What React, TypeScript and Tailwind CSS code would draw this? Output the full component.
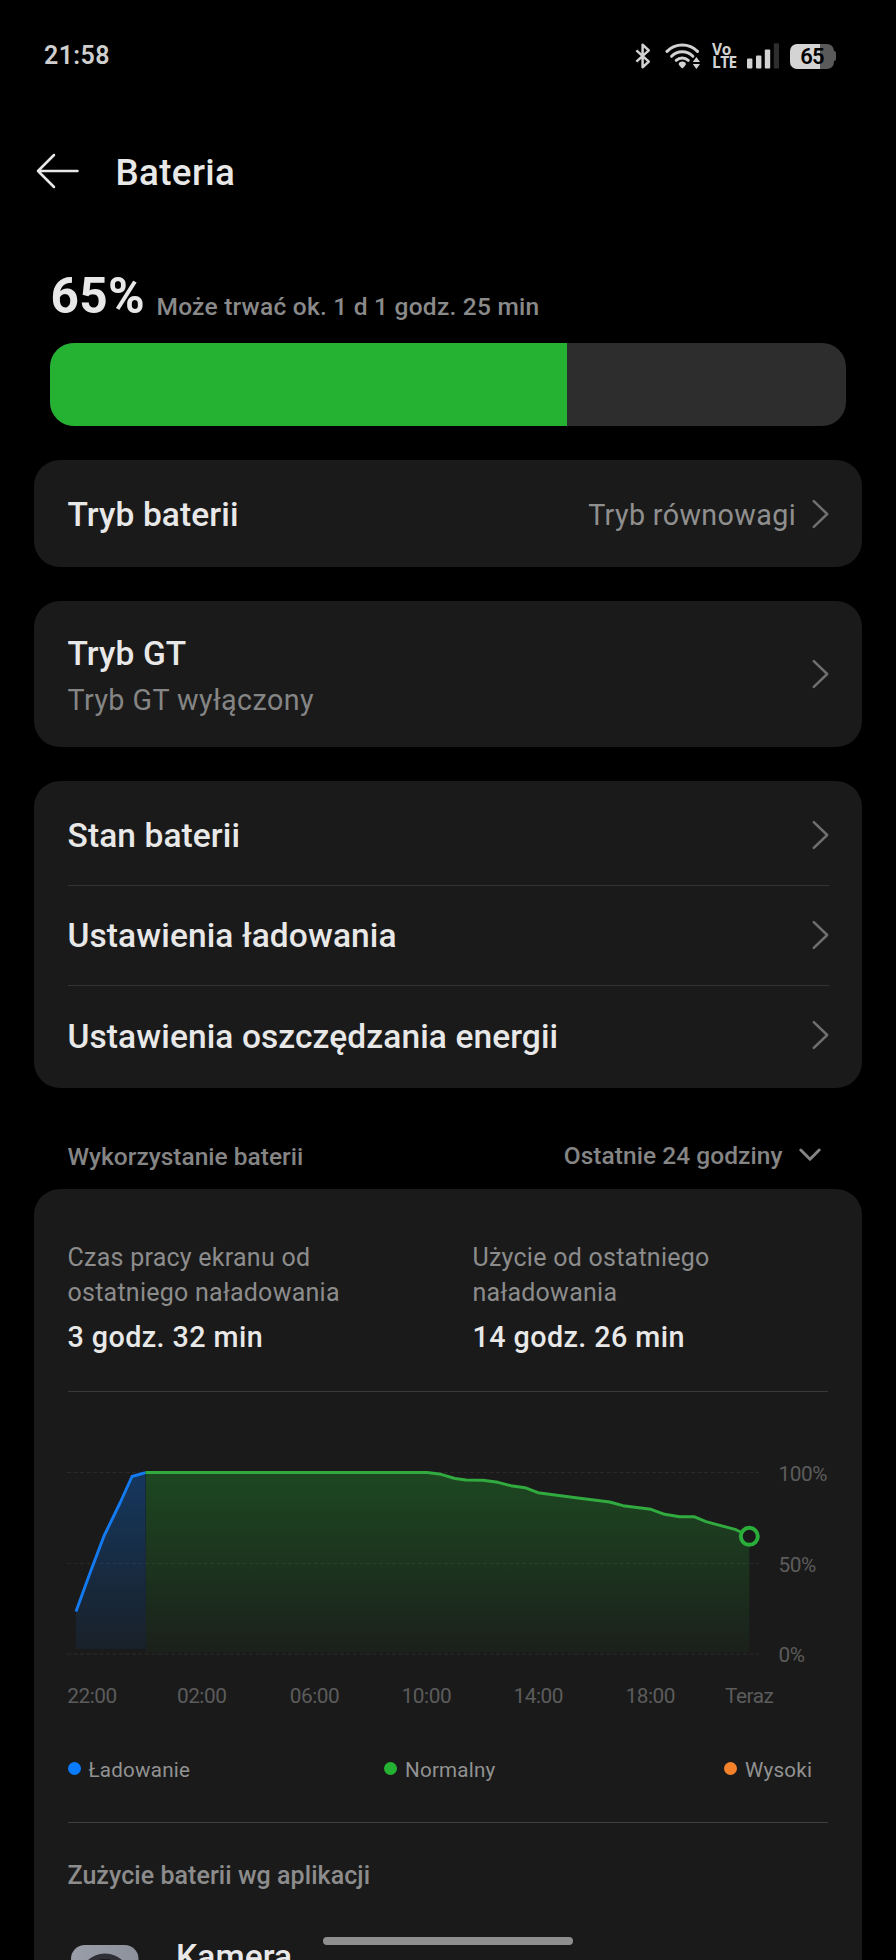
import type { ReactNode } from "react";

function Chevron({ className = "" }: { className?: string }) {
  return (
    <svg width="18" height="30" viewBox="0 0 18 30" fill="none" stroke="#6f6f6f" strokeWidth="2.5" strokeLinecap="round" strokeLinejoin="round" className={`shrink-0 ${className}`}>
      <path d="M2.8 2.2 16.2 15 2.8 27.8" />
    </svg>
  );
}

function Card({ className, children }: { className: string; children: ReactNode }) {
  return <section className={`mx-[34px] rounded-[26px] bg-[#1a1a1a] pr-[33px] pl-[33.5px] ${className}`}>{children}</section>;
}

function Title({ children }: { children: ReactNode }) {
  return <span className="text-[33.5px] leading-[40px] font-medium tracking-[0.1px] text-[#e8e8e8]">{children}</span>;
}

function LinkRow({ label, last = false }: { label: string; last?: boolean }) {
  return (
    <div className={`flex h-[100px] items-center justify-between border-[#333333] pt-px ${last ? "" : "border-b"}`}>
      <Title>{label}</Title>
      <Chevron className="mb-[3px]" />
    </div>
  );
}

function StatusBar() {
  return (
    <div className="flex h-[112px] shrink-0 items-center pr-[60px] pl-[44px]">
      <span className="text-[25px] leading-[30px] font-semibold tracking-[0.4px] text-[#cfcfcf]">21:58</span>
      <svg width="16" height="26" viewBox="0 0 16 26" fill="none" stroke="#d2d2d2" strokeWidth="2.5" strokeLinejoin="round" className="ml-auto">
        <path d="M1.4 7.4 13.8 18.6 7.6 24.2V1.800L13.800 7.400 1.400 18.600" />
      </svg>
      <svg width="36" height="28" viewBox="0 0 36 28" fill="none" className="ml-[14px]">
        <g stroke="#d2d2d2" strokeWidth="3" strokeLinecap="round">
          <path d="M2 9.400A21.500 21.500 0 0 1 32.500 9.400" />
          <path d="M6.600 14.300A15 15 0 0 1 27.900 14.300" />
          <path d="M11.200 18.300A9 9 0 0 1 23.300 18.300" />
        </g>
        <path d="M17.300 19.500c2 0 3.600 1.200 3.600 2.600 0 .7-.4 1.200-.9 1.700l-2 2.100c-.4.4-1 .4-1.400 0l-2-2.100c-.5-.5-.9-1-.9-1.700 0-1.400 1.600-2.600 3.600-2.600Z" fill="#d2d2d2" />
        <path d="M31.400 15 35 20h-7.200ZM31.400 27 27.800 22H35Z" fill="#d2d2d2" />
      </svg>
      <div className="ml-[11px] flex w-[24px] flex-col font-['Open_Sans'] text-[15.5px] leading-[13.500px] font-bold text-[#d2d2d2]">
        <span className="tracking-[-0.200px]">Vo</span>
        <span className="tracking-[-0.600px]">LTE</span>
      </div>
      <svg width="32" height="26" viewBox="0 0 32 26" fill="#d2d2d2" className="ml-[11px]">
        <rect x="0" y="15.500" width="5.400" height="10" rx="1" />
        <rect x="9" y="12.500" width="5.400" height="13" rx="1" />
        <rect x="17.800" y="6.500" width="5.400" height="19" rx="1" />
        <rect x="26.800" y=".3" width="5.200" height="25.200" rx="1" fill="#2e2e2e" />
      </svg>
      <div className="ml-[11px] flex items-center">
        <div className="flex h-[25px] w-[44px] items-center justify-center rounded-[7px] bg-linear-to-r from-[#d4d4d4] from-[68%] to-[#5a5a5a] to-[68%]">
          <span className="text-[22px] leading-[25px] font-semibold tracking-[-0.9px] text-black">65</span>
        </div>
        <div className="h-[10px] w-[2px] rounded-r-[2px] bg-[#5a5a5a]" />
      </div>
    </div>
  );
}

const grid = [1472.5, 1563.3, 1654];
const hours: [string, number][] = [
  ["22:00", 67.300],
  ["02:00", 176.900],
  ["06:00", 289.700],
  ["10:00", 401.600],
  ["14:00", 513.500],
  ["18:00", 625.500],
  ["Teraz", 725],
];
const charge = "76,1611.500 90,1573 104,1536 120,1503 132,1476.500 145.500,1472.700";
const drain =
  "145.500,1472.500 427,1472.500 441,1474.300 455,1478.500 466,1480 483,1480.300 498,1482.300 511,1485.700 525,1487.700 538,1492.700 574,1497.500 609.700,1502 623,1505.700 651,1509.300 664.700,1514.300 679.700,1516.700 694,1516.700 706,1521.700 736,1529.700 749.300,1536.300";

function Chart() {
  return (
    <svg width="796" height="332" viewBox="34 1392 796 332" fill="none" className="ml-[-33.500px] block max-w-none shrink-0">
      <defs>
        <linearGradient id="green" gradientUnits="userSpaceOnUse" x1="0" y1="1472" x2="0" y2="1654">
          <stop offset="0" stopColor="#25b233" stopOpacity="0.3" />
          <stop offset="1" stopColor="#25b233" stopOpacity="0.040" />
        </linearGradient>
        <linearGradient id="blue" gradientUnits="userSpaceOnUse" x1="0" y1="1472" x2="0" y2="1654">
          <stop offset="0" stopColor="#0a7cff" stopOpacity="0.3" />
          <stop offset="1" stopColor="#0a7cff" stopOpacity="0.060" />
        </linearGradient>
      </defs>
      <polygon points={`${charge} 146,1649 76,1649`} fill="url(#blue)" />
      <polygon points={`${drain} 749.300,1652 146,1652 146,1472.500`} fill="url(#green)" />
      {grid.map((y) => (
        <line key={y} x1="67" x2="759" y1={y} y2={y} stroke="#ffffff" strokeOpacity="0.070" strokeDasharray="4 2.500" />
      ))}
      <polyline points={charge} stroke="#137bf2" strokeWidth="2.900" strokeLinejoin="round" />
      <polyline points={drain} stroke="#31ab3f" strokeWidth="2.900" strokeLinejoin="round" />
      <circle cx="749.300" cy="1536.300" r="8.500" fill="#1a1a1a" stroke="#2aae3a" strokeWidth="4" />
      <g fill="#5c5c5c" fontSize="20.800" letterSpacing="-0.450">
        <text x="778.500" y="1480.500">100%</text>
        <text x="778.500" y="1571.500">50%</text>
        <text x="778.500" y="1662">0%</text>
        {hours.map(([label, x]) => (
          <text key={label} x={x} y="1703.300">
            {label}
          </text>
        ))}
      </g>
    </svg>
  );
}

function Legend({ dot, label, width }: { dot: string; label: string; width: string }) {
  return (
    <div className={`flex items-center ${width}`}>
      <span className={`mb-[3px] h-[13px] w-[13px] rounded-full ${dot}`} />
      <span className="ml-[8px] text-[20.6px] leading-[28px] tracking-[0.220px] text-[#929292]">{label}</span>
    </div>
  );
}

function Stat({ lines, value, width }: { lines: [string, string]; value: string; width: string }) {
  return (
    <div className={width}>
      <p className="text-[25px] leading-[34.500px] tracking-[0.250px] text-[#8c8c8c]">
        {lines[0]}
        <br />
        {lines[1]}
      </p>
      <p className="mt-[7px] text-[28.700px] leading-[40px] font-medium tracking-[0.420px] text-[#e8e8e8]">{value}</p>
    </div>
  );
}

export default function App() {
  return (
    <div className="relative flex h-[1960px] w-[896px] flex-col overflow-hidden bg-black font-[Roboto,sans-serif]">
      <StatusBar />

      <header className="flex h-[118px] shrink-0 items-center pl-[36px]">
        <svg width="44" height="36" viewBox="0 0 44 36" fill="none" stroke="#e8e8e8" strokeWidth="2.500" strokeLinecap="round" strokeLinejoin="round">
          <path d="M41.500 18H2M18 2 2 18 18 34" />
        </svg>
        <h1 className="mt-[3px] ml-[35.500px] text-[36.800px] leading-[44px] font-medium tracking-[0.350px] text-[#e8e8e8]">Bateria</h1>
      </header>

      <div className="flex h-[113px] shrink-0 pl-[50.500px]">
        <span className="mt-[36px] w-[106px] text-[49.600px] leading-[60px] font-bold tracking-[0.300px] text-[#e8e8e8]">65%</span>
        <span className="mt-[62px] text-[24.500px] leading-[30px] font-medium tracking-[0.230px] text-[#8a8a8a]">Może trwać ok. 1 d 1 godz. 25 min</span>
      </div>

      <div className="mr-[50px] ml-[50px] h-[83px] shrink-0 overflow-hidden rounded-[24px] bg-[#2d2d2d]">
        <div className="h-full w-[65%] bg-[#25b233]" />
      </div>

      <Card className="mt-[34px] flex h-[107px] shrink-0 items-center justify-between pt-[2px]">
        <Title>Tryb baterii</Title>
        <div className="flex items-center">
          <span className="mr-[15px] text-[28.700px] leading-[40px] tracking-[0.370px] text-[#8f8f8f]">Tryb równowagi</span>
          <Chevron className="mb-[2px]" />
        </div>
      </Card>

      <Card className="mt-[34px] flex h-[146px] shrink-0 items-center justify-between">
        <div className="flex flex-col pt-[6px]">
          <Title>Tryb GT</Title>
          <span className="mt-[6px] text-[28.700px] leading-[40px] tracking-[0.420px] text-[#858585]">Tryb GT wyłączony</span>
        </div>
        <Chevron />
      </Card>

      <Card className="mt-[34px] h-[307px] shrink-0 pt-[5px]">
        <LinkRow label="Stan baterii" />
        <LinkRow label="Ustawienia ładowania" />
        <LinkRow label="Ustawienia oszczędzania energii" last />
      </Card>

      <div className="flex h-[101px] shrink-0 items-start justify-between pt-[53px] pr-[76px] pl-[67.500px] text-[24.500px] leading-[30px] font-medium text-[#858585]">
        <span className="mt-px">Wykorzystanie baterii</span>
        <div className="flex items-center">
          <span className="tracking-[0.050px]">Ostatnie 24 godziny</span>
          <svg width="22" height="14" viewBox="0 0 22 14" fill="none" stroke="#858585" strokeWidth="2.900" strokeLinecap="round" strokeLinejoin="round" className="mr-[-0.500px] mb-[2px] ml-[16px]">
            <path d="M1.800 2 11 11.300 20.200 2" />
          </svg>
        </div>
      </div>

      <Card className="flex h-[820px] shrink-0 flex-col pt-[52px]">
        <div className="flex h-[150px] shrink-0">
          <Stat lines={["Czas pracy ekranu od", "ostatniego naładowania"]} value="3 godz. 32 min" width="w-[405px]" />
          <Stat lines={["Użycie od ostatniego", "naładowania"]} value="14 godz. 26 min" width="w-[356px]" />
        </div>
        <div className="h-px w-[760.500px] shrink-0 bg-[#3a3a3a]" />
        <Chart />
        <div className="flex h-[98px] shrink-0 items-start pt-[32px]">
          <Legend dot="bg-[#0a7cff]" label="Ładowanie" width="w-[316.500px]" />
          <Legend dot="bg-[#25b233]" label="Normalny" width="w-[340px]" />
          <Legend dot="bg-[#f5822a]" label="Wysoki" width="w-[90px]" />
        </div>
        <div className="h-px w-[760.500px] shrink-0 bg-[#3f3f3f]" />
        <h2 className="mt-[37px] text-[25px] leading-[32px] font-medium tracking-[0.060px] text-[#8c8c8c]">Zużycie baterii wg aplikacji</h2>
        <div className="mt-[44px] flex">
          <svg width="68" height="68" viewBox="0 0 68 68" className="mt-[9px] ml-[3.500px] shrink-0">
            <defs>
              <linearGradient id="case" x1="0" y1="0" x2="1" y2="0">
                <stop offset="0" stopColor="#9a9ea8" />
                <stop offset="1" stopColor="#8c919c" />
              </linearGradient>
            </defs>
            <rect width="67.500" height="67.500" rx="14" fill="url(#case)" />
            <circle cx="34" cy="34" r="25.500" fill="#2e3036" />
            <circle cx="34" cy="34" r="20" fill="#17181c" />
          </svg>
          <div className="mt-px ml-[37px]">
            <Title>Kamera</Title>
          </div>
        </div>
      </Card>

      <div className="absolute top-[1937px] left-[323px] h-[8px] w-[250px] rounded-full bg-[#8f8f8f]" />
    </div>
  );
}
